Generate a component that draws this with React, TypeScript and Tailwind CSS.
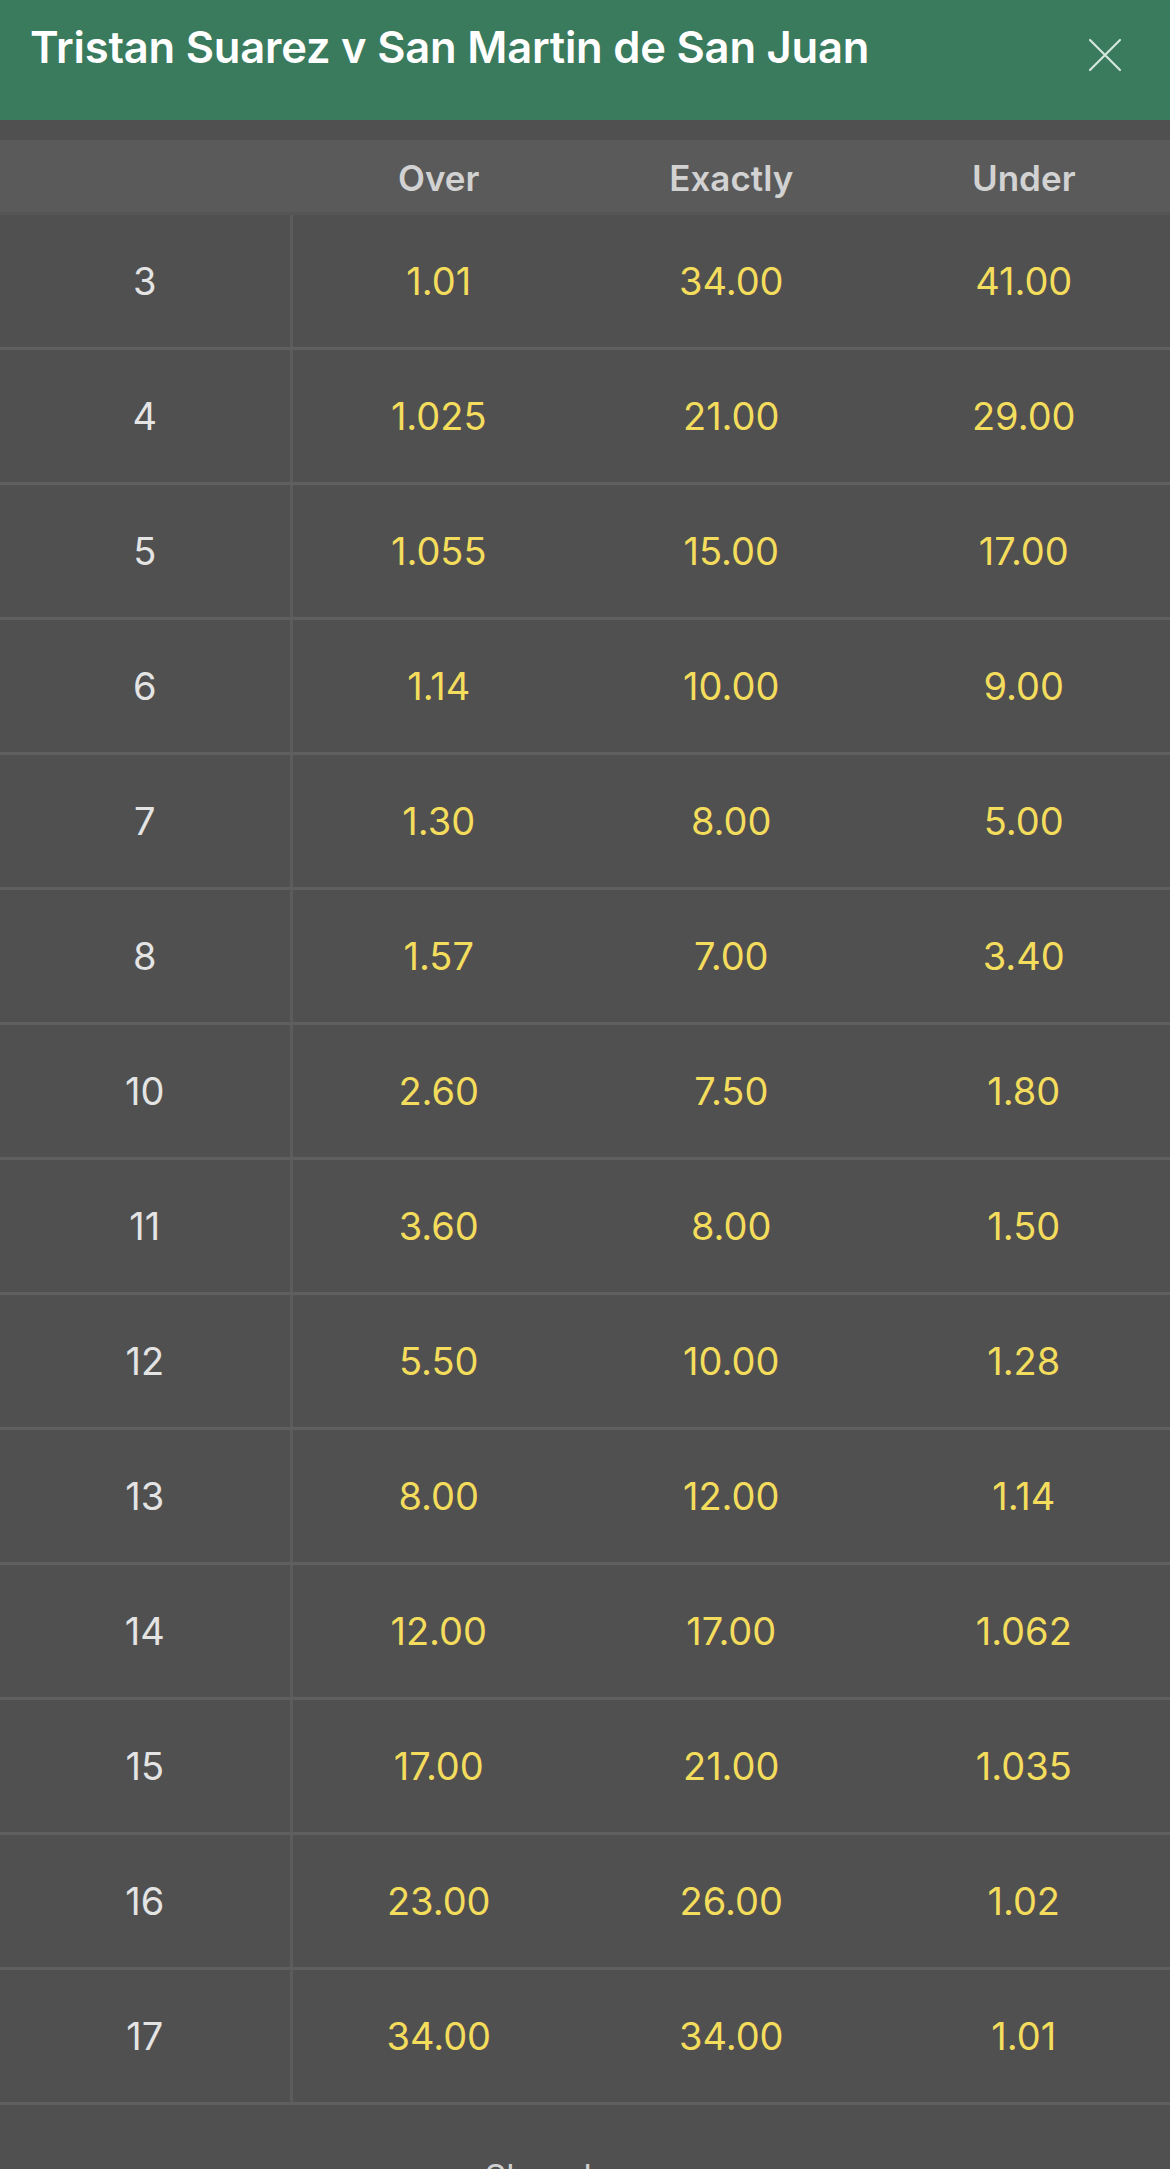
import React from 'react';

const rows: [string, string, string, string][] = [
  ['3', '1.01', '34.00', '41.00'],
  ['4', '1.025', '21.00', '29.00'],
  ['5', '1.055', '15.00', '17.00'],
  ['6', '1.14', '10.00', '9.00'],
  ['7', '1.30', '8.00', '5.00'],
  ['8', '1.57', '7.00', '3.40'],
  ['10', '2.60', '7.50', '1.80'],
  ['11', '3.60', '8.00', '1.50'],
  ['12', '5.50', '10.00', '1.28'],
  ['13', '8.00', '12.00', '1.14'],
  ['14', '12.00', '17.00', '1.062'],
  ['15', '17.00', '21.00', '1.035'],
  ['16', '23.00', '26.00', '1.02'],
  ['17', '34.00', '34.00', '1.01'],
];

const App: React.FC = () => {
  return (
    <div
      className="min-h-screen bg-[#505050] overflow-hidden"
      style={{ fontFamily: 'Inter, Roboto, "Liberation Sans", sans-serif' }}
    >
      {/* Header */}
      <div className="h-[120px] bg-[#3a7a5d] flex items-start justify-between pl-[30px] pr-[48px] pt-[22px]">
        <h1 className="text-[43.5px] leading-[50px] font-semibold text-white tracking-[-0.2px]">
          Tristan Suarez v San Martin de San Juan
        </h1>
        <button className="mt-[16px] text-[#d4e8dc]">
          <svg width="34" height="34" viewBox="0 0 34 34" fill="none" stroke="currentColor" strokeWidth="2.2" strokeLinecap="round">
            <path d="M2 2L32 32M32 2L2 32" />
          </svg>
        </button>
      </div>

      <div className="h-[20px] bg-[#505050]" />

      {/* Column headings */}
      <div className="grid grid-cols-4 h-[72px] pt-[4px] bg-[#5a5a5a] items-center text-[35px] font-semibold text-[#d2d2d2]">
        <div />
        <div className="text-center">Over</div>
        <div className="text-center">Exactly</div>
        <div className="text-center">Under</div>
      </div>
      <div className="h-[3px] bg-[#555555]" />

      {/* Rows */}
      <div>
        {rows.map(([goals, over, exactly, under]) => (
          <div key={goals} className="grid grid-cols-4 h-[135px] border-b-[3px] border-[#5f5f5f] text-[38px]">
            <div className="flex items-center justify-center text-[#e4e4e4] border-r-[3px] border-[#5c5c5c]">{goals}</div>
            <div className="flex items-center justify-center text-[#f4dd5c]">{over}</div>
            <div className="flex items-center justify-center text-[#f4dd5c]">{exactly}</div>
            <div className="flex items-center justify-center text-[#f4dd5c]">{under}</div>
          </div>
        ))}
      </div>

      {/* Show less */}
      <div className="flex items-center justify-center gap-3 pt-[46px] pb-[40px] text-[34px] text-[#cfcfcf]">
        <span>Show less</span>
        <svg width="26" height="26" viewBox="0 0 24 24" fill="none" stroke="currentColor" strokeWidth="2" strokeLinecap="round" strokeLinejoin="round">
          <path d="M5 15l7-7 7 7" />
        </svg>
      </div>
    </div>
  );
};

export default App;
